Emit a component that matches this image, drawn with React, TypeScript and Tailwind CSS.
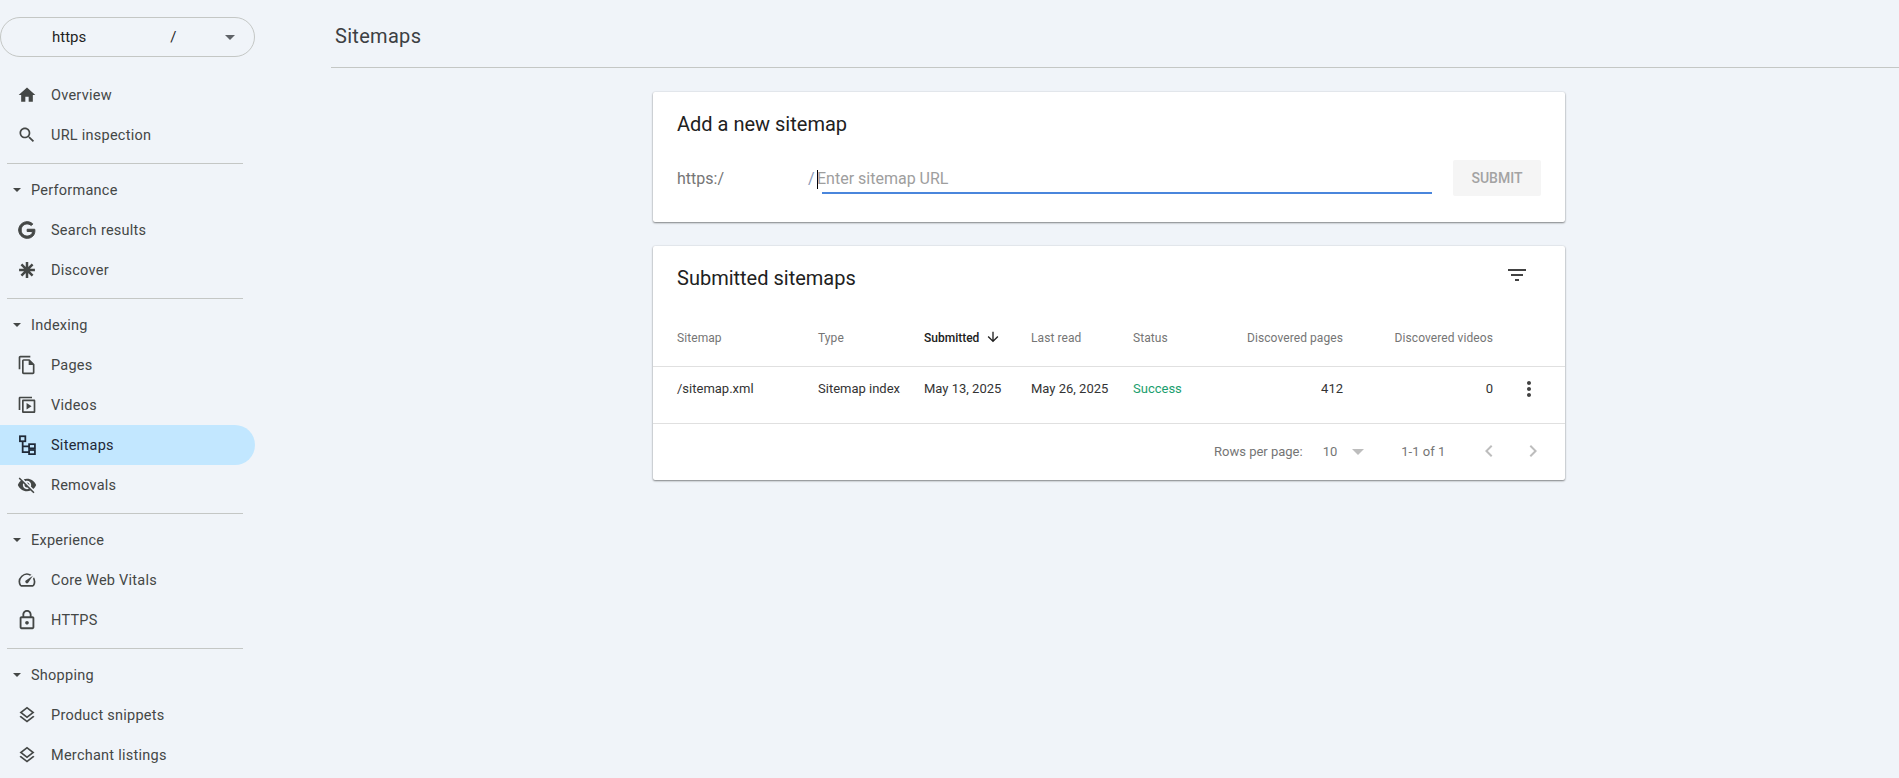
import React from 'react';

const paths: Record<string, string> = {
  home: 'M10 20v-6h4v6h5v-8h3L12 3 2 12h3v8z',
  search: 'M15.5 14h-.79l-.28-.27C15.41 12.59 16 11.11 16 9.5 16 5.91 13.09 3 9.5 3S3 5.91 3 9.5 5.91 16 9.5 16c1.61 0 3.09-.59 4.23-1.57l.27.28v.79l5 4.99L20.49 19l-4.99-5zm-6 0C7.01 14 5 11.99 5 9.5S7.01 5 9.5 5 14 7.01 14 9.5 11.99 14 9.5 14z',
  google: 'M21.35 11.1h-9.17v2.73h6.51c-.33 3.81-3.5 5.44-6.5 5.44C8.36 19.27 5 16.25 5 12c0-4.1 3.2-7.27 7.2-7.27 3.09 0 4.9 1.97 4.9 1.97L19 4.72S16.56 2 12.1 2C6.42 2 2.03 6.8 2 12c0 5.05 4.13 10 10.22 10 5.35 0 9.25-3.67 9.25-9.09 0-1.15-.15-1.81-.15-1.81z',
  pages: 'M16 1H4c-1.1 0-2 .9-2 2v14h2V3h12V1zm-1 4H8c-1.1 0-1.99.9-1.99 2L6 21c0 1.1.89 2 1.99 2H19c1.1 0 2-.9 2-2V11l-6-6zM8 21V7h6v5h5v9H8z',
  removals: 'M12 7c2.76 0 5 2.24 5 5 0 .65-.13 1.26-.36 1.83l2.92 2.92c1.51-1.26 2.7-2.89 3.43-4.75-1.73-4.39-6-7.5-11-7.5-1.4 0-2.74.25-3.98.7l2.16 2.16C10.74 7.13 11.35 7 12 7zM2 4.27l2.28 2.28.46.46C3.08 8.3 1.78 10.02 1 12c1.73 4.39 6 7.5 11 7.5 1.55 0 3.03-.3 4.38-.84l.42.42L19.73 22 21 20.73 3.27 3 2 4.27zM7.53 9.8l1.55 1.55c-.05.21-.08.43-.08.65 0 1.66 1.34 3 3 3 .22 0 .44-.03.65-.08l1.55 1.55c-.67.33-1.41.53-2.2.53-2.76 0-5-2.24-5-5 0-.79.2-1.53.53-2.2zm4.31-.78l3.15 3.15.02-.16c0-1.66-1.34-3-3-3l-.17.01z',
  speed: 'M20.38 8.57l-1.23 1.85a8 8 0 0 1-.22 7.58H5.07A8 8 0 0 1 15.58 6.85l1.85-1.23A10 10 0 0 0 3.35 19a2 2 0 0 0 1.72 1h13.85a2 2 0 0 0 1.74-1 10 10 0 0 0-.27-10.44zm-9.79 6.84a2 2 0 0 0 2.83 0l5.66-8.49-8.49 5.66a2 2 0 0 0 0 2.83z',
  lock: 'M18 8h-1V6c0-2.76-2.24-5-5-5S7 3.24 7 6v2H6c-1.1 0-2 .9-2 2v10c0 1.1.9 2 2 2h12c1.1 0 2-.9 2-2V10c0-1.1-.9-2-2-2zM9 6c0-1.66 1.34-3 3-3s3 1.34 3 3v2H9V6zm9 14H6V10h12v10zm-6-3c1.1 0 2-.9 2-2s-.9-2-2-2-2 .9-2 2 .9 2 2 2z',
  layers: 'M11.99 18.54l-7.37-5.73L3 14.07l9 7 9-7-1.63-1.27-7.38 5.74zM12 16l7.36-5.73L21 9l-9-7-9 7 1.63 1.27L12 16zm0-11.47L17.74 9 12 13.47 6.26 9 12 4.53z',
  filter: 'M10 18h4v-2h-4v2zM3 6v2h18V6H3zm3 7h12v-2H6v2z',
  down: 'M20 12l-1.41-1.41L13 16.17V4h-2v12.17l-5.58-5.59L4 12l8 8 8-8z',
  more: 'M12 8c1.1 0 2-.9 2-2s-.9-2-2-2-2 .9-2 2 .9 2 2 2zm0 2c-1.1 0-2 .9-2 2s.9 2 2 2 2-.9 2-2-.9-2-2-2zm0 6c-1.1 0-2 .9-2 2s.9 2 2 2 2-.9 2-2-.9-2-2-2z',
  prev: 'M15.41 7.41L14 6l-6 6 6 6 1.41-1.41L10.83 12z',
  next: 'M10 6L8.59 7.41 13.17 12l-4.58 4.59L10 18l6-6z',
};

const Icon = ({ name, className }: { name: string; className?: string }) => (
  <svg viewBox="0 0 24 24" fill="currentColor" className={className}>
    <path d={paths[name]} />
  </svg>
);

const GoogleIcon = () => (
  <svg viewBox="0 0 24 24" className="w-5 h-5" fill="currentColor" stroke="currentColor" strokeWidth="1.2">
    <path d={paths.google} />
  </svg>
);

const Asterisk = () => (
  <svg viewBox="0 0 24 24" className="w-5 h-5" stroke="currentColor" strokeWidth="3" fill="none">
    <path d="M12 2.500v19M2.500 12h19M5.300 5.300l13.400 13.400M18.700 5.300L5.300 18.700" />
  </svg>
);

const VideoStack = () => (
  <svg viewBox="0 0 24 24" className="w-5 h-5" fill="currentColor">
    <path d="M2 3.500C2 2.700 2.700 2 3.500 2H18v2H4v14H2z" />
    <path fillRule="evenodd" d="M7.500 5.500h13c.8 0 1.500.7 1.500 1.500v13c0 .8-.7 1.500-1.500 1.500h-13C6.700 21.500 6 20.800 6 20V7c0-.8.7-1.500 1.500-1.500zM8 7.500v12h12v-12z" />
    <path d="M11.500 9.500v8l6-4z" />
  </svg>
);

const SitemapIcon = () => (
  <svg viewBox="0 0 24 24" className="w-5 h-5" fill="none" stroke="currentColor" strokeWidth="2.1">
    <rect x="3.500" y="1.500" width="6.500" height="6" />
    <rect x="14.500" y="11" width="7" height="5" />
    <rect x="14.500" y="18" width="7" height="5" />
    <path d="M6.800 7.500v13h7.700M6.800 13.500h7.700" />
  </svg>
);

const NavIcon = ({ name }: { name: string }) => {
  if (name === 'google') return <GoogleIcon />;
  if (name === 'asterisk') return <Asterisk />;
  if (name === 'video') return <VideoStack />;
  if (name === 'sitemap') return <SitemapIcon />;
  if (name === 'lock') return <Icon name="lock" className="w-[22px] h-[22px] -mx-px" />;
  return <Icon name={name} className="w-5 h-5" />;
};

const NavItem = ({ icon, label, active }: { icon: string; label: string; active?: boolean }) => (
  <div
    className={`flex items-center h-10 w-[255px] pl-[17px] rounded-r-full ${
      active ? 'bg-[#c2e7ff] text-[#1f2937]' : 'text-[#444746]'
    }`}
  >
    <NavIcon name={icon} />
    <span className="ml-[14px] pt-[2px] text-[14.5px] tracking-[0.25px]">{label}</span>
  </div>
);

const NavHeader = ({ label }: { label: string }) => (
  <div className="flex items-center h-10 pl-[13px] text-[#444746]">
    <span className="w-0 h-0 border-x-[4px] border-x-transparent border-t-[4px] border-t-[#444746]" />
    <span className="ml-[10px] pt-[1px] text-[14.5px] tracking-[0.25px]">{label}</span>
  </div>
);

const Divider = () => <div className="mt-2 mb-[6px] ml-[7px] w-[236px] h-px bg-[#c4c7c5]" />;

const Sidebar = () => (
  <aside className="w-[331px] shrink-0 pt-[17px]">
    <div className="flex items-center w-[255px] h-10 mb-[18px] border border-[#c4c7c5] rounded-full pl-[51px] pr-[19px] text-[15px] text-[#1f1f1f]">
      <span>https</span>
      <span className="ml-[84px]">/</span>
      <span className="ml-auto w-0 h-0 border-x-[5px] border-x-transparent border-t-[5px] border-t-[#5f6368]" />
    </div>
    <NavItem icon="home" label="Overview" />
    <NavItem icon="search" label="URL inspection" />
    <Divider />
    <NavHeader label="Performance" />
    <NavItem icon="google" label="Search results" />
    <NavItem icon="asterisk" label="Discover" />
    <Divider />
    <NavHeader label="Indexing" />
    <NavItem icon="pages" label="Pages" />
    <NavItem icon="video" label="Videos" />
    <NavItem icon="sitemap" label="Sitemaps" active />
    <NavItem icon="removals" label="Removals" />
    <Divider />
    <NavHeader label="Experience" />
    <NavItem icon="speed" label="Core Web Vitals" />
    <NavItem icon="lock" label="HTTPS" />
    <Divider />
    <NavHeader label="Shopping" />
    <NavItem icon="layers" label="Product snippets" />
    <NavItem icon="layers" label="Merchant listings" />
  </aside>
);

const cardClass =
  'w-[912px] bg-white rounded-[2px] shadow-[0_1px_2px_rgba(0,0,0,0.45),0_0_2px_rgba(0,0,0,0.12)]';

const AddSitemap = () => (
  <section className={`${cardClass} h-[130px] px-6`}>
    <h2 className="pt-[20px] text-[20px] leading-6 text-[#212121]">Add a new sitemap</h2>
    <div className="flex items-start mt-[31px]">
      <span className="text-[16px] leading-6 text-[#757575] w-[131px]">https:/</span>
      <span className="text-[16px] leading-6 text-[#8a9ab8] w-[9px]">/</span>
      <div className="w-[615px]">
        <div className="flex items-center h-6">
          <span className="w-px h-[19px] bg-black" />
          <input
            placeholder="Enter sitemap URL"
            className="flex-1 -ml-px text-[16px] bg-transparent outline-none placeholder:text-[#9e9e9e]"
          />
        </div>
        <div className="mt-px ml-[5px] h-[2px] w-[610px] bg-[#4a86dc]" />
      </div>
      <button className="ml-[21px] -mt-[7px] w-[88px] h-9 bg-[#f5f5f5] text-[14px] font-medium text-[#a3a3a3] rounded-[2px]">
        SUBMIT
      </button>
    </div>
  </section>
);

const rowGrid = 'grid grid-cols-[141px_106px_107px_102px_60px_150px_150px_1fr] px-6 items-center';

const SubmittedSitemaps = () => (
  <section className={`${cardClass} h-[234px] mt-6`}>
    <div className="flex items-center justify-between h-[64px] pl-6 pr-[36px]">
      <h2 className="text-[20px] text-[#212121]">Submitted sitemaps</h2>
      <Icon name="filter" className="w-6 h-6 -mt-[6px] text-[#424242]" />
    </div>
    <div className={`${rowGrid} h-[57px] pb-[1px] border-b border-[#e0e0e0] text-[12px] tracking-[0.08px] text-[#757575]`}>
      <span>Sitemap</span>
      <span>Type</span>
      <span className="flex items-center font-medium tracking-normal text-[#212121]">
        Submitted
        <Icon name="down" className="w-4 h-4 ml-[6px] -mt-[2px]" />
      </span>
      <span>Last read</span>
      <span>Status</span>
      <span className="text-right">Discovered pages</span>
      <span className="text-right">Discovered videos</span>
    </div>
    <div className={`${rowGrid} h-[57px] pb-[13px] border-b border-[#e0e0e0] text-[13px] text-[#333333]`}>
      <span>/sitemap.xml</span>
      <span>Sitemap index</span>
      <span>May 13, 2025</span>
      <span>May 26, 2025</span>
      <span className="text-[#1a9e6e]">Success</span>
      <span className="text-right">412</span>
      <span className="text-right">0</span>
      <span className="pl-6">
        <Icon name="more" className="w-6 h-6 text-[#424242]" />
      </span>
    </div>
    <div className="flex items-center h-[56px] pl-[561px] text-[13px] text-[#757575]">
      <span>Rows per page:</span>
      <span className="ml-5">10</span>
      <span className="ml-[15px] w-0 h-0 border-x-[6px] border-x-transparent border-t-[6px] border-t-[#bdbdbd]" />
      <span className="ml-[37px]">1-1 of 1</span>
      <Icon name="prev" className="w-6 h-6 ml-8 -mt-[3px] text-[#bdbdbd]" />
      <Icon name="next" className="w-6 h-6 ml-5 -mt-[3px] text-[#bdbdbd]" />
    </div>
  </section>
);

export default function App() {
  return (
    <div className="flex h-[778px] overflow-hidden bg-[#f0f4f9] font-['Roboto',sans-serif]">
      <Sidebar />
      <main className="flex-1">
        <header className="h-[68px] border-b border-[#c4c7c5] pl-1 pt-[23px]">
          <h1 className="text-[20px] leading-[26px] tracking-[0.3px] text-[#3c4043]">Sitemaps</h1>
        </header>
        <div className="pl-[322px] pt-6">
          <AddSitemap />
          <SubmittedSitemaps />
        </div>
      </main>
    </div>
  );
}
